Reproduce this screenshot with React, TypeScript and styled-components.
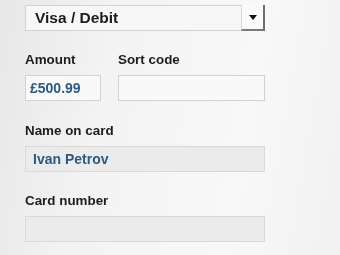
import React from "react";
import styled, { createGlobalStyle } from "styled-components";

const GlobalStyle = createGlobalStyle`
  html, body {
    margin: 0;
    padding: 0;
    width: 340px;
    height: 255px;
    overflow: hidden;
  }
  body {
    font-family: "Liberation Sans", Arial, sans-serif;
    background: linear-gradient(100deg, #e7e7e7 0%, #f3f3f3 30%, #f8f8f8 70%, #f1f1f1 100%);
  }
`;

const Form = styled.form`
  display: flex;
  flex-direction: column;
  width: 240px;
  padding: 5px 0 0 25px;
  filter: blur(0.35px);
`;

const Select = styled.div`
  display: flex;
  align-items: stretch;
  height: 26px;
  box-sizing: border-box;
  border: 1px solid #d2d2d2;
  background: #f7f7f7;
`;

const SelectValue = styled.div`
  flex: 1;
  display: flex;
  align-items: center;
  padding-left: 9px;
  font-size: 15.5px;
  font-weight: 700;
  color: #1c1c1c;
`;

const SelectButton = styled.div`
  width: 21px;
  display: flex;
  align-items: center;
  justify-content: center;
  background: #fafafa;
  border-left: 1px solid #d8d8d8;
  border-right: 2px solid #6e6e6e;
  border-bottom: 2px solid #7a7a7a;
  margin: -1px -1px -1px 0;
`;

const Arrow = styled.span`
  width: 0;
  height: 0;
  border-left: 4px solid transparent;
  border-right: 4px solid transparent;
  border-top: 5px solid #111;
`;

const Row = styled.div`
  display: flex;
  gap: 17px;
  margin-top: 21px;
`;

const Field = styled.div<{ $width?: number; $top?: number }>`
  display: flex;
  flex-direction: column;
  gap: 7px;
  width: ${({ $width }) => ($width ? `${$width}px` : "100%")};
  margin-top: ${({ $top }) => $top ?? 0}px;
`;

const Label = styled.label`
  font-size: 13.4px;
  line-height: 16px;
  font-weight: 700;
  color: #1d1d1d;
`;

const Input = styled.div<{ $filled?: boolean }>`
  height: 26px;
  box-sizing: border-box;
  display: flex;
  align-items: center;
  padding-left: ${({ $filled }) => ($filled ? 7 : 4)}px;
  font-size: 14px;
  font-weight: 700;
  color: #2c5a80;
  border: 1px solid ${({ $filled }) => ($filled ? "#d9d9d9" : "#d2d2d2")};
  background: ${({ $filled }) => ($filled ? "#ebebeb" : "#f9f9f9")};
`;

export default function App() {
  return (
    <>
      <GlobalStyle />
      <Form>
        <Select>
          <SelectValue>Visa / Debit</SelectValue>
          <SelectButton>
            <Arrow />
          </SelectButton>
        </Select>
        <Row>
          <Field $width={76}>
            <Label>Amount</Label>
            <Input>£500.99</Input>
          </Field>
          <Field $width={147}>
            <Label>Sort code</Label>
            <Input />
          </Field>
        </Row>
        <Field $top={22}>
          <Label>Name on card</Label>
          <Input $filled>Ivan Petrov</Input>
        </Field>
        <Field $top={21}>
          <Label>Card number</Label>
          <Input $filled />
        </Field>
      </Form>
    </>
  );
}
